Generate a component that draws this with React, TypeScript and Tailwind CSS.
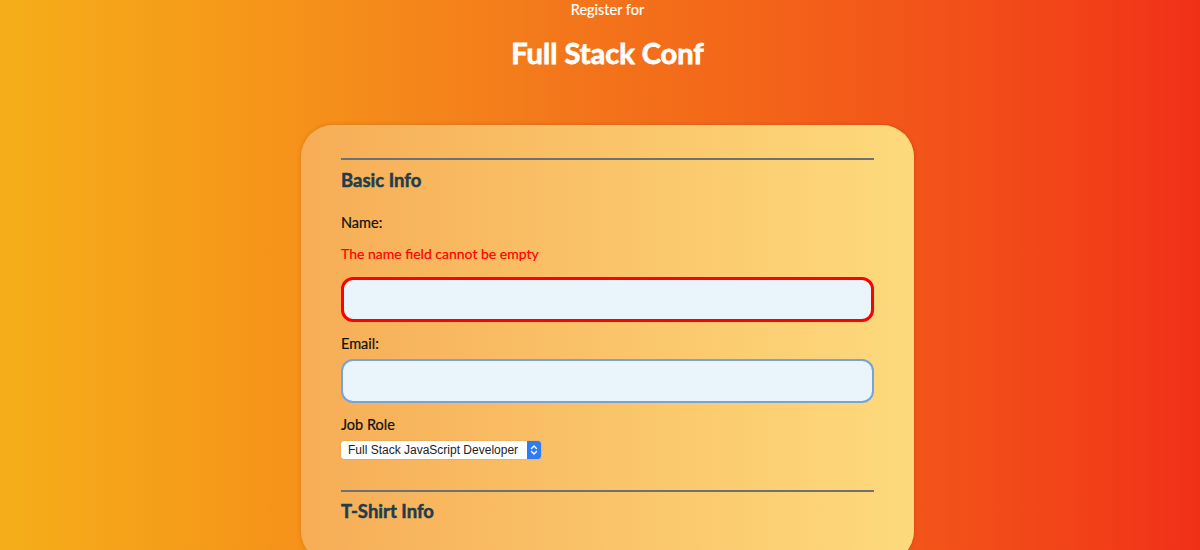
import React from "react";

function SelectArrows() {
  return (
    <svg width="8" height="12" viewBox="0 0 8 12" fill="none">
      <path d="M1.5 4.5L4 2L6.5 4.5" stroke="white" strokeWidth="1.4" strokeLinecap="round" strokeLinejoin="round" />
      <path d="M1.5 7.5L4 10L6.5 7.5" stroke="white" strokeWidth="1.4" strokeLinecap="round" strokeLinejoin="round" />
    </svg>
  );
}

export default function App() {
  return (
    <main
      className="min-h-screen overflow-hidden bg-gradient-to-r from-[#f5ae19] via-[#f3731a] to-[#f12f18] pl-[15px] text-[#111]"
      style={{ fontFamily: "Lato, 'Noto Sans', sans-serif" }}
    >
      <header className="text-center text-white">
        <p className="text-[14.5px] leading-[20px] [-webkit-text-stroke:0.2px_white]">Register for</p>
        <h1 className="mt-[15px] text-[29px] font-bold leading-[36px] [-webkit-text-stroke:0.8px_white]">
          Full Stack Conf
        </h1>
      </header>

      <form className="mx-auto mt-[54px] w-[613px] rounded-[32px] bg-gradient-to-r from-[#f6ad56] to-[#fdda7c] px-[40px] pt-[33px] pb-10 shadow-[0_0_4px_rgba(0,0,0,0.15)]">
        <fieldset>
          <div className="h-[2px] bg-[#6b7175]" />
          <h2 className="mt-[8px] text-[18.5px] font-bold leading-[24px] text-[#1f3d4e] [-webkit-text-stroke:0.5px_#1f3d4e]">
            Basic Info
          </h2>

          <label className="mt-[21px] block text-[14.5px] leading-[20px] [-webkit-text-stroke:0.2px_#111]">Name:</label>
          <p className="mt-[11px] text-[14px] leading-[20px] text-[#ff0000] [-webkit-text-stroke:0.2px_#ff0000]">
            The name field cannot be empty
          </p>
          <input
            type="text"
            className="mt-[13px] block h-[45px] w-full rounded-[12px] border-[3px] border-[#ff0000] bg-[#e9f5fb] px-3 outline-none"
          />

          <label className="mt-[12px] block text-[14.5px] leading-[20px] [-webkit-text-stroke:0.2px_#111]">Email:</label>
          <input
            type="email"
            className="mt-[5px] block h-[44px] w-full rounded-[12px] border-2 border-[#76a3d9] bg-[#e9f5fb] px-3 outline-none"
          />

          <label className="mt-[12px] block text-[14.5px] leading-[20px] [-webkit-text-stroke:0.2px_#111]">Job Role</label>
          <div
            className="mt-[6px] flex h-[18px] w-[200px] items-center rounded-[3px] bg-white shadow-[0_0_1px_rgba(0,0,0,0.4)]"
            style={{ fontFamily: "'Liberation Sans', Arial, sans-serif" }}
          >
            <span className="flex-1 whitespace-nowrap pl-[7px] text-[12px] leading-[18px] text-[#222]">
              Full Stack JavaScript Developer
            </span>
            <span className="flex h-[18px] w-[14px] items-center justify-center rounded-r-[3px] bg-[#2f7bf3]">
              <SelectArrows />
            </span>
          </div>
        </fieldset>

        <fieldset className="mt-[31px]">
          <div className="h-[2px] bg-[#6b7175]" />
          <h2 className="mt-[7px] text-[18.5px] font-bold leading-[24px] text-[#1f3d4e] [-webkit-text-stroke:0.5px_#1f3d4e]">
            T-Shirt Info
          </h2>
        </fieldset>
      </form>
    </main>
  );
}
